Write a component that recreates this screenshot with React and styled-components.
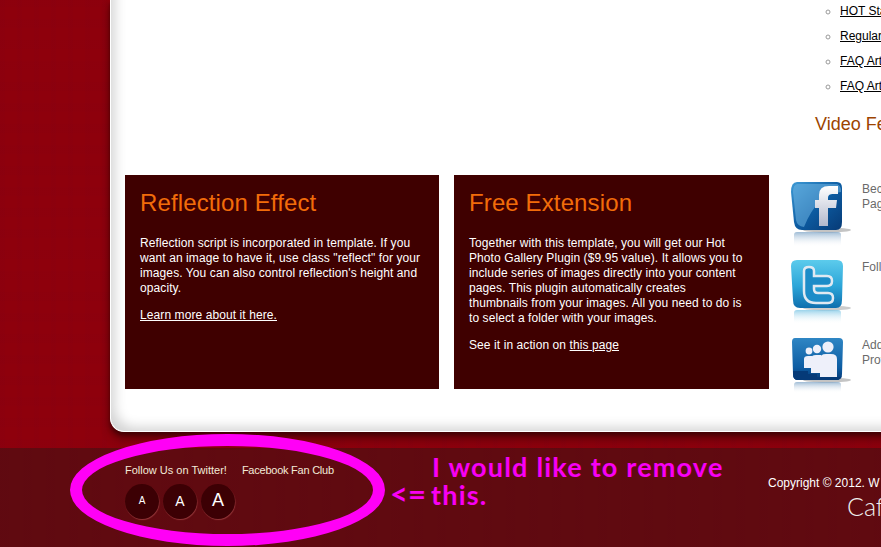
import React from 'react';
import styled, { createGlobalStyle } from 'styled-components';

const GlobalStyle = createGlobalStyle`
  html, body {
    margin: 0;
    padding: 0;
    background: #8d000c;
  }
`;

const Page = styled.div`
  position: relative;
  width: 881px;
  height: 547px;
  overflow: hidden;
  font-family: "Liberation Sans", Arial, sans-serif;
`;

const Upper = styled.div`
  height: 448px;
  box-sizing: border-box;
  padding-left: 110px;
  background-color: #8e000c;
  background-image:
    repeating-linear-gradient(90deg, rgba(90,0,50,0.03) 0 5px, rgba(0,0,0,0) 5px 17px),
    repeating-linear-gradient(0deg, rgba(110,0,30,0.04) 0 9px, rgba(0,0,0,0) 9px 21px);
`;

const Panel = styled.div`
  position: relative;
  width: 800px;
  height: 432px;
  box-sizing: border-box;
  padding-left: 14px;
  background: #fff;
  border-left: 1px solid #fff;
  border-bottom: 1px solid #fff;
  border-radius: 0 0 0 14px;
  box-shadow:
    inset 11px -11px 12px -7px rgba(0, 0, 0, 0.17),
    0 3px 4px rgba(40, 0, 0, 0.55),
    0 7px 10px rgba(40, 0, 0, 0.45);
`;

const TopArea = styled.div`
  display: flow-root;
  height: 175px;
  padding-left: 690px;
  white-space: nowrap;
`;

const LinkList = styled.ul`
  margin: -1px 0 0;
  padding: 0 0 0 25px;
  list-style: circle;
  font-size: 12px;
  line-height: 25px;

  li::marker {
    color: #9a9a9a;
  }
`;

const ListLink = styled.a`
  color: #000;
  text-decoration: underline;
`;

const VideoTitle = styled.h3`
  margin: 13px 0 0;
  font-size: 18px;
  font-weight: normal;
  line-height: 24px;
  color: #9c4400;
`;

const Columns = styled.div`
  display: flex;
  align-items: flex-start;
`;

const Card = styled.div`
  flex-shrink: 0;
  width: ${(p) => p.$width}px;
  height: 214px;
  box-sizing: border-box;
  margin-right: 15px;
  padding: 14px ${(p) => p.$right}px 0 15px;
  background: #3f0000;
  color: #fff;
  font-size: 12px;
  line-height: 15px;
  letter-spacing: 0.09px;
`;

const CardTitle = styled.h2`
  margin: 0 0 19px;
  font-size: 24px;
  font-weight: normal;
  line-height: 28px;
  letter-spacing: 0.12px;
  color: #f26c0a;
`;

const CardText = styled.p`
  margin: 0 0 12px;
`;

const CardLink = styled.a`
  color: #fff;
  text-decoration: underline;
`;

const Social = styled.div`
  display: flex;
  flex-direction: column;
  gap: 10px;
  margin: 5px 0 0 7px;
`;

const SocialRow = styled.div`
  display: flex;
  gap: 11px;
  height: 68px;
  font-size: 12px;
  line-height: 15px;
  color: #6a6a6a;
  white-space: nowrap;

  svg {
    flex-shrink: 0;
  }
`;

const SocialText = styled.div`
  padding-top: 2px;
`;

const Footer = styled.footer`
  display: flex;
  height: 99px;
  background-color: #600a10;
  background-image: repeating-linear-gradient(90deg, rgba(90,0,20,0.05) 0 9px, rgba(0,0,0,0) 9px 23px);
  color: #fff;
`;

const FooterLeft = styled.div`
  width: 768px;
  flex-shrink: 0;
  box-sizing: border-box;
  padding: 15px 0 0 125px;
`;

const FooterLinks = styled.div`
  display: flex;
  gap: 15px;
  font-size: 11px;
  line-height: 14px;
  color: #f2ead8;
`;

const FanLink = styled.span`
  letter-spacing: -0.24px;
`;

const SizeButtons = styled.div`
  display: flex;
  gap: 4px;
  margin-top: 7px;
`;

const SizeButton = styled.div`
  display: flex;
  align-items: center;
  justify-content: center;
  width: 34px;
  height: 35px;
  padding-bottom: 2px;
  box-sizing: border-box;
  border-radius: 50%;
  background: #3c0004;
  box-shadow: 0.5px 1px 1px rgba(190, 90, 90, 0.55);
  font-size: ${(p) => p.$size}px;
  color: #fff;
`;

const FooterRight = styled.div`
  padding-top: 28px;
  white-space: nowrap;
`;

const Copyright = styled.div`
  font-size: 12px;
  line-height: 15px;
`;

const Brand = styled.div`
  margin: 1px 0 0 79px;
  font-family: Lato, "Open Sans", sans-serif;
  font-weight: 300;
  font-size: 25px;
  line-height: 28px;
  color: #eee;
`;

const Ellipse = styled.div`
  position: absolute;
  left: 70px;
  top: 434px;
  width: 315px;
  height: 112px;
  box-sizing: border-box;
  border: 12px solid #ff00f6;
  border-radius: 50%;
`;

const Note = styled.div`
  position: absolute;
  left: 390px;
  top: 453px;
  font-family: Lato, "Open Sans", sans-serif;
  font-weight: 700;
  font-size: 27px;
  line-height: 27px;
  letter-spacing: 1.2px;
  color: #f800f4;
  white-space: nowrap;
`;

const NoteLine = styled.div`
  display: flex;
  align-items: baseline;
  padding-left: ${(p) => p.$indent || 0}px;
`;

const Arrow = styled.span`
  width: 41px;
  letter-spacing: 0;
  font-size: 31px;
`;

const FacebookIcon = () => (
  <svg width="60" height="68" viewBox="0 0 60 68">
    <defs>
      <linearGradient id="fbBody" x1="0" y1="0" x2="1" y2="1">
        <stop offset="0" stopColor="#3f9bd6" />
        <stop offset="0.5" stopColor="#0d5da3" />
        <stop offset="1" stopColor="#063a76" />
      </linearGradient>
      <linearGradient id="fade" x1="0" y1="0" x2="0" y2="1">
        <stop offset="0" stopColor="#5d8db8" stopOpacity="0.6" />
        <stop offset="1" stopColor="#ffffff" stopOpacity="0" />
      </linearGradient>
      <linearGradient id="fbGlyph" x1="0" y1="0" x2="0" y2="1">
        <stop offset="0" stopColor="#ffffff" />
        <stop offset="1" stopColor="#b2b8cc" />
      </linearGradient>
    </defs>
    <ellipse cx="36" cy="50" rx="24" ry="2.5" fill="#555" opacity="0.35" />
    <rect x="3" y="52" width="47" height="15" rx="3" fill="url(#fade)" />
    <path d="M6 2 H46 Q51 2 51 8 L51 42 Q51 50 45 50 H11 Q4 50 3 42 L0 12 Q0 2 6 2Z" fill="url(#fbBody)" />
    <path d="M6 4 H46 Q49 5 50 9 L50 12 Q26 14 13 47 Q6 46 5 40 L2 12 Q2 5 6 4Z" fill="#6fb4e2" opacity="0.55" />
    <path d="M28 46 V28 H24 V20 H28 V15 Q28 6 38 6 H47 V14 H41 Q37 14 37 18 V20 H46 L45 28 H37 V46Z" fill="url(#fbGlyph)" />
  </svg>
);

const TwitterIcon = () => (
  <svg width="60" height="68" viewBox="0 0 60 68">
    <defs>
      <linearGradient id="twBody" x1="0" y1="0" x2="0" y2="1">
        <stop offset="0" stopColor="#5ccbec" />
        <stop offset="0.55" stopColor="#2ba5d8" />
        <stop offset="1" stopColor="#0f6fae" />
      </linearGradient>
      <linearGradient id="twFade" x1="0" y1="0" x2="0" y2="1">
        <stop offset="0" stopColor="#58b6de" stopOpacity="0.6" />
        <stop offset="1" stopColor="#ffffff" stopOpacity="0" />
      </linearGradient>
    </defs>
    <ellipse cx="36" cy="50" rx="24" ry="2.5" fill="#555" opacity="0.3" />
    <rect x="3" y="52" width="47" height="14" rx="3" fill="url(#twFade)" />
    <path d="M6 2 H46 Q52 2 52 8 L51 42 Q51 50 45 50 H9 Q2 50 2 42 L0 8 Q0 2 6 2Z" fill="url(#twBody)" />
    <path d="M13 13 Q13 9 18 9 Q23 9 23 13 V18 H36 Q41 18 41 23 Q41 28 36 28 H23 V31 Q23 35 27 35 H37 Q42 35 42 40 Q42 45 37 45 H25 Q13 45 13 33Z" fill="#1c8cc8" stroke="#dfe9f2" strokeWidth="2.5" />
  </svg>
);

const MyspaceIcon = () => (
  <svg width="60" height="68" viewBox="0 -2 60 68">
    <defs>
      <linearGradient id="msBody" x1="0" y1="0" x2="0" y2="1">
        <stop offset="0" stopColor="#2f86c4" />
        <stop offset="0.7" stopColor="#0d5da3" />
        <stop offset="1" stopColor="#053a78" />
      </linearGradient>
      <linearGradient id="msFade" x1="0" y1="0" x2="0" y2="1">
        <stop offset="0" stopColor="#5d8db8" stopOpacity="0.6" />
        <stop offset="1" stopColor="#ffffff" stopOpacity="0" />
      </linearGradient>
    </defs>
    <ellipse cx="36" cy="42" rx="24" ry="2.5" fill="#555" opacity="0.35" />
    <rect x="3" y="44" width="47" height="11" rx="3" fill="url(#msFade)" />
    <path d="M4 0 H48 Q52 0 52 4 L51 36 Q51 42 45 42 H7 Q2 42 2 36 L1 4 Q1 0 4 0Z" fill="url(#msBody)" />
    <path d="M2 33 H17 V36 H26 V39 H51 V36 Q51 42 45 42 H7 Q2 42 2 36Z" fill="#053a78" />
    <g fill="#eef0fa">
      <circle cx="18" cy="13" r="3.4" />
      <circle cx="26" cy="11" r="4.2" />
      <circle cx="37" cy="9" r="5.6" />
      <path d="M13 30 V21 Q13 18 17 18 H21 V30Z" />
      <path d="M20 35 V21 Q20 17 25 17 H30 V35Z" />
      <path d="M29 39 V21 Q29 16 35 16 H40 Q46 16 46 21 V39Z" />
    </g>
  </svg>
);

export default function App() {
  return (
    <Page>
      <GlobalStyle />
      <Upper>
        <Panel>
          <TopArea>
            <LinkList>
              <li><ListLink>HOT Start</ListLink></li>
              <li><ListLink>Regular Pages</ListLink></li>
              <li><ListLink>FAQ Articles</ListLink></li>
              <li><ListLink>FAQ Articles</ListLink></li>
            </LinkList>
            <VideoTitle>Video Features</VideoTitle>
          </TopArea>
          <Columns>
            <Card $width={314} $right={15}>
              <CardTitle>Reflection Effect</CardTitle>
              <CardText>
                Reflection script is incorporated in template. If you want an image to have it, use class "reflect" for your images. You can also control reflection's height and opacity.
              </CardText>
              <CardText>
                <CardLink>Learn more about it here.</CardLink>
              </CardText>
            </Card>
            <Card $width={315} $right={23}>
              <CardTitle>Free Extension</CardTitle>
              <CardText>
                Together with this template, you will get our Hot Photo Gallery Plugin ($9.95 value). It allows you to include series of images directly into your content pages. This plugin automatically creates thumbnails from your images. All you need to do is to select a folder with your images.
              </CardText>
              <CardText>
                See it in action on <CardLink>this page</CardLink>
              </CardText>
            </Card>
            <Social>
              <SocialRow>
                <FacebookIcon />
                <SocialText>Become a Fan<br />Page</SocialText>
              </SocialRow>
              <SocialRow>
                <TwitterIcon />
                <SocialText>Follow Us</SocialText>
              </SocialRow>
              <SocialRow>
                <MyspaceIcon />
                <SocialText>Add Us<br />Profile</SocialText>
              </SocialRow>
            </Social>
          </Columns>
        </Panel>
      </Upper>
      <Footer>
        <FooterLeft>
          <FooterLinks>
            <span>Follow Us on Twitter!</span>
            <FanLink>Facebook Fan Club</FanLink>
          </FooterLinks>
          <SizeButtons>
            <SizeButton $size={10}>A</SizeButton>
            <SizeButton $size={14}>A</SizeButton>
            <SizeButton $size={18}>A</SizeButton>
          </SizeButtons>
        </FooterLeft>
        <FooterRight>
          <Copyright>Copyright © 2012. W</Copyright>
          <Brand>Cafe</Brand>
        </FooterRight>
      </Footer>
      <Ellipse />
      <Note>
        <NoteLine $indent={42}>I would like to remove</NoteLine>
        <NoteLine><Arrow>&lt;=</Arrow>this.</NoteLine>
      </Note>
    </Page>
  );
}
